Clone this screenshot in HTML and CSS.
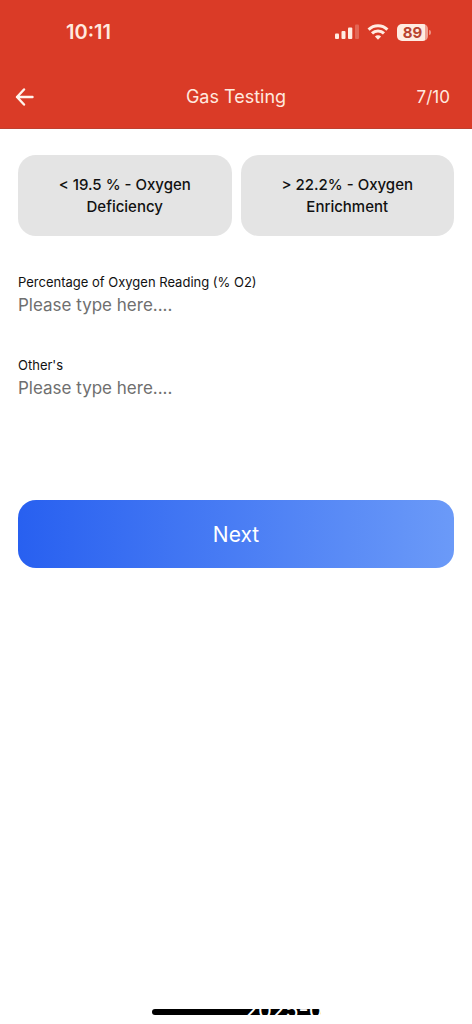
FILE: index.html
```html
<!DOCTYPE html>
<html lang="en">
<head>
<meta charset="utf-8">
<meta name="viewport" content="width=device-width, initial-scale=1">
<title>Gas Testing</title>
<link rel="stylesheet" href="styles.css">
</head>
<body>
<header class="top">
  <div class="status">
    <time class="clock">10:11</time>
    <div class="indicators">
      <svg class="signal" width="24" height="16" viewBox="0 0 24 16" aria-hidden="true">
        <rect x="0" y="9.5" width="4" height="5.5" rx="1"/>
        <rect x="6.5" y="7" width="4" height="8" rx="1"/>
        <rect x="13" y="3.5" width="4.3" height="11.5" rx="1"/>
        <rect class="dim" x="20" y="0.5" width="4" height="14.5" rx="1"/>
      </svg>
      <svg class="wifi" width="22" height="16" viewBox="0 0 22 16" aria-hidden="true">
        <path d="M1.6 5.6a13.3 13.3 0 0 1 18.8 0M5 9.4a8.5 8.5 0 0 1 12 0"/>
        <path class="dot" d="M11 15.7l-3.1-3.2a4.4 4.4 0 0 1 6.2 0z"/>
      </svg>
      <div class="battery"><span class="level">89</span></div>
    </div>
  </div>
  <div class="bar">
    <button class="back" type="button" aria-label="Back">
      <svg width="20" height="18" viewBox="0 0 20 18" aria-hidden="true"><path d="M17.5 9H2M9 1.5L2 9l7 7.5"/></svg>
    </button>
    <h1 class="title">Gas Testing</h1>
    <span class="step">7/10</span>
  </div>
</header>
<main class="content">
  <div class="choices">
    <button class="choice" type="button">&lt; 19.5 % - Oxygen Deficiency</button>
    <button class="choice" type="button">&gt; 22.2% - Oxygen Enrichment</button>
  </div>
  <div class="field">
    <label class="label" for="reading">Percentage of Oxygen Reading (% O2)</label>
    <input class="entry" id="reading" type="text" placeholder="Please type here....">
  </div>
  <div class="field">
    <label class="label" for="others">Other's</label>
    <input class="entry" id="others" type="text" placeholder="Please type here....">
  </div>
  <button class="next" type="button">Next</button>
</main>
<footer class="home">
  <div class="home-bar"><span class="stamp">2025-0</span></div>
</footer>
</body>
</html>
```
FILE: styles.css
```css
* { box-sizing: border-box; }
body {
  margin: 0;
  min-height: 100vh;
  display: flex;
  flex-direction: column;
  background: #fff;
  color: #111;
  font-family: Inter, "Liberation Sans", sans-serif;
}
button, input { font: inherit; color: inherit; border: 0; margin: 0; }
.top {
  background: #da3b27;
  color: #ffe9df;
  border-bottom: 1px solid #c0402f;
}
.status {
  height: 64px;
  padding: 0 44px 0 66px;
  display: flex;
  align-items: center;
  justify-content: space-between;
}
.clock { font-size: 20px; font-weight: 600; line-height: 24px; }
.indicators { display: flex; align-items: center; gap: 8px; }
.signal { fill: #ffece2; }
.dim { opacity: 0.25; }
.wifi { fill: none; stroke: #ffece2; stroke-width: 3; }
.dot { fill: #ffece2; stroke: none; }
.battery {
  position: relative;
  width: 31px;
  height: 17px;
  border-radius: 5px;
  background: linear-gradient(90deg, #ffece2 28px, #f0a294 28px);
  color: #b9432f;
}
.battery::after {
  content: "";
  position: absolute;
  left: 32px;
  top: 6px;
  width: 2px;
  height: 5px;
  border-radius: 0 2px 2px 0;
  background: #ee8f80;
}
.level {
  display: block;
  text-align: center;
  font-size: 15px;
  font-weight: 700;
  line-height: 17px;
}
.bar {
  height: 64px;
  padding: 2px 15px 0;
  display: grid;
  grid-template-columns: 1fr auto 1fr;
  align-items: center;
}
.back { display: flex; padding: 0; background: none; justify-self: start; }
.back svg {
  fill: none;
  stroke: #fff3ec;
  stroke-width: 2.4;
  stroke-linecap: round;
  stroke-linejoin: round;
}
.title, .step { margin: 0; font-size: 18px; font-weight: 400; line-height: 24px; }
.step { justify-self: end; padding-right: 7px; font-size: 17px; }
.content { flex: 1; padding: 26px 18px 0; }
.choices { display: grid; grid-template-columns: 1fr 1fr; gap: 9px; margin-bottom: 36px; }
.choice {
  min-height: 81px;
  padding: 18px 32px;
  border-radius: 18px;
  background: #e4e4e4;
  font-size: 15px;
  font-weight: 500;
  line-height: 22px;
}
.field { display: flex; flex-direction: column; margin-bottom: 37px; }
.label { font-size: 13px; line-height: 20px; }
.entry {
  width: 100%;
  height: 26px;
  padding: 0;
  background: none;
  font-size: 17px;
  line-height: 26px;
}
.entry::placeholder { color: #6f6f6f; opacity: 1; }
.next {
  display: block;
  width: 100%;
  height: 68px;
  margin-top: 99px;
  border-radius: 18px;
  background: linear-gradient(90deg, #2860f0, #6b9af8);
  color: #fff;
  font-size: 21px;
}
.home { display: flex; justify-content: center; padding-bottom: 9px; }
.home-bar {
  position: relative;
  width: 169px;
  height: 6px;
  border-radius: 3px;
  background: #000;
}
.stamp {
  position: absolute;
  left: 93px;
  top: -11px;
  color: #fff;
  font-size: 22px;
  line-height: 24px;
  white-space: nowrap;
}
```
